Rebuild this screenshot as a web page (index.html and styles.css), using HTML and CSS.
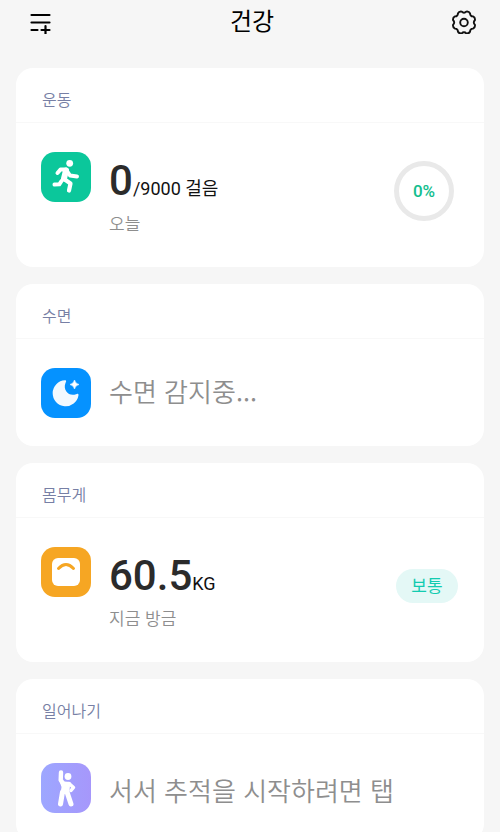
FILE: index.html
```html
<!DOCTYPE html>
<html lang="ko">
<head>
<meta charset="utf-8">
<meta name="viewport" content="width=device-width, initial-scale=1">
<title>건강</title>
<link rel="stylesheet" href="styles.css">
</head>
<body>
<header class="topbar">
  <button class="icon-button" type="button" aria-label="항목 추가">
    <svg width="24" height="24" viewBox="0 0 24 24" fill="none" stroke="#000" stroke-width="2.2" stroke-linecap="round">
      <path d="M3.5 5H21.5M3.5 12.500H21.5M3.5 20H9.5M13.5 20H21.5M17.500 16V24"/>
    </svg>
  </button>
  <h1 class="title">건강</h1>
  <button class="icon-button" type="button" aria-label="설정">
    <svg width="24" height="24" viewBox="-12 -12.5 24 24" fill="none" stroke="#111" stroke-width="1.9" stroke-linejoin="round">
      <path d="M0 -9.8Q1.3 -9.8 2.2 -10.9Q5 -11.4 6.1 -9Q6 -7.6 6.9 -6.9Q7.6 -6 9 -6.1Q11.4 -5 10.9 -2.2Q9.8 -1.3 9.8 0Q9.8 1.3 10.9 2.2Q11.4 5 9 6.1Q7.6 6 6.9 6.9Q6 7.6 6.1 9Q5 11.4 2.2 10.9Q1.3 9.8 0 9.8Q-1.3 9.8 -2.2 10.9Q-5 11.4 -6.1 9Q-6 7.6 -6.9 6.9Q-7.6 6 -9 6.1Q-11.4 5 -10.9 2.2Q-9.8 1.3 -9.8 0Q-9.8 -1.3 -10.9 -2.2Q-11.4 -5 -9 -6.1Q-7.6 -6 -6.9 -6.9Q-6 -7.6 -6.1 -9Q-5 -11.4 -2.2 -10.9Q-1.3 -9.8 0 -9.8Z"/>
      <circle r="3.8"/>
    </svg>
  </button>
</header>
<main class="cards">
  <section class="card">
    <h2 class="card-title">운동</h2>
    <div class="card-body">
      <svg class="badge" viewBox="0 0 50 50" aria-hidden="true">
        <rect width="50" height="50" rx="14" fill="#0bc79b"/>
        <circle cx="28.7" cy="11.3" r="3.4" fill="#fff"/>
        <g fill="none" stroke="#fff" stroke-linecap="round" stroke-linejoin="round">
          <path stroke-width="4" d="M16.5 21L19.5 17.5L25 17.5L29 23.5L36 24.5"/>
          <path stroke-width="6" d="M25 18.5L23 26.5"/>
          <path stroke-width="4.2" d="M23 27L29.5 31.5L28 38.5"/>
          <path stroke-width="4" d="M20.5 29L18.3 32.3L13.5 32.6"/>
        </g>
      </svg>
      <div class="reading">
        <p class="value-line"><strong class="value">0</strong><span class="unit">/9000 걸음</span></p>
        <p class="note">오늘</p>
      </div>
      <div class="ring">0%</div>
    </div>
  </section>
  <section class="card">
    <h2 class="card-title">수면</h2>
    <div class="card-body compact">
      <svg class="badge" viewBox="0 0 50 50" aria-hidden="true">
        <rect width="50" height="50" rx="14" fill="#0592ff"/>
        <path fill="#f2f9ff" d="M24 12.2A13 13 0 1 0 37.5 27.2C37.7 25.6 36.6 25.2 35 26.2C28.5 29 21.5 22.5 24.5 15C25.5 13 25.5 12 24 12.2Z"/>
        <path fill="#fff" stroke="#fff" stroke-width=".6" d="M33.5 12Q34.3 15.7 38 16.5Q34.3 17.3 33.5 21Q32.7 17.3 29 16.5Q32.7 15.7 33.5 12Z"/>
      </svg>
      <p class="message">수면 감지중...</p>
    </div>
  </section>
  <section class="card">
    <h2 class="card-title">몸무게</h2>
    <div class="card-body">
      <svg class="badge" viewBox="0 0 50 50" aria-hidden="true">
        <rect width="50" height="50" rx="14" fill="#f6a623"/>
        <rect x="11" y="11" width="28" height="28" rx="6" fill="#fff"/>
        <path d="M17.5 21.5Q25 13.5 32.5 21.5" fill="none" stroke="#f6a623" stroke-width="3" stroke-linecap="round"/>
      </svg>
      <div class="reading">
        <p class="value-line"><strong class="value">60.5</strong><span class="unit">KG</span></p>
        <p class="note">지금 방금</p>
      </div>
      <span class="tag">보통</span>
    </div>
  </section>
  <section class="card">
    <h2 class="card-title">일어나기</h2>
    <div class="card-body compact">
      <svg class="badge" viewBox="0 0 50 50" aria-hidden="true">
        <defs>
          <linearGradient id="violet" x1="0" y1="0" x2="1" y2="0">
            <stop offset="0" stop-color="#9da7ff"/>
            <stop offset="1" stop-color="#a697fb"/>
          </linearGradient>
        </defs>
        <rect width="50" height="50" rx="14" fill="url(#violet)"/>
        <circle cx="27" cy="13.5" r="3.4" fill="#fff"/>
        <g fill="none" stroke="#fff" stroke-linecap="round" stroke-linejoin="round">
          <path stroke-width="4.4" d="M20 9.5L19.7 17L22.5 21"/>
          <path stroke-width="3.5" d="M28 20.5L32.5 24.5L30 27.5"/>
          <path stroke-width="5" d="M21.5 29L19.5 41M26 29L30 41"/>
        </g>
        <path fill="#fff" d="M18 17L23 18.5L29.5 19L28 31H19.5L20.5 24Z"/>
      </svg>
      <p class="message prompt">서서 추적을 시작하려면 탭</p>
    </div>
  </section>
</main>
</body>
</html>
```
FILE: styles.css
```css
* {
  box-sizing: border-box;
}

body {
  margin: 0;
  background: #f6f6f6;
  color: #111;
  font-family: Roboto, "Noto Sans CJK KR", sans-serif;
}

h1,
h2,
p {
  margin: 0;
}

.topbar {
  display: flex;
  align-items: center;
  justify-content: space-between;
  height: 44px;
  padding: 0 20px 0 24px;
}

.icon-button {
  display: flex;
  align-items: center;
  justify-content: center;
  width: 32px;
  height: 32px;
  padding: 0;
  border: 0;
  background: none;
}

.title {
  font-size: 24px;
  font-weight: 400;
  line-height: 44px;
  color: #000;
}

.cards {
  display: grid;
  gap: 17px;
  padding: 24px 16px 0;
}

.card {
  overflow: hidden;
  border-radius: 17px;
  background: #fff;
}

.card-title {
  padding: 19px 26px 11px;
  border-bottom: 1px solid #f8f8f8;
  color: #777fa5;
  font-family: "Noto Sans CJK KR", sans-serif;
  font-size: 16px;
  font-weight: 350;
  line-height: 24px;
}

.card-body {
  display: flex;
  align-items: flex-start;
  gap: 18px;
  height: 144px;
  padding: 29px 26px 0 25px;
}

.card-body.compact {
  height: 107px;
}

.badge {
  flex: none;
  width: 50px;
  height: 50px;
}

.reading {
  flex: 1;
}

.value-line {
  display: flex;
  align-items: baseline;
  white-space: nowrap;
}

.value {
  color: #2b2b2b;
  font-size: 42px;
  font-weight: 500;
  line-height: 58px;
}

.unit {
  font-size: 18px;
  line-height: 20px;
}

.note {
  color: #8e8e8e;
  font-family: "Noto Sans CJK KR", sans-serif;
  font-size: 17px;
  font-weight: 350;
  line-height: 25px;
}

.message {
  color: #8e8e8e;
  font-family: "Noto Sans CJK KR", sans-serif;
  font-size: 26px;
  font-weight: 350;
  line-height: 46px;
}

.message.prompt {
  line-height: 54px;
}

.ring {
  display: flex;
  align-items: center;
  justify-content: center;
  width: 60px;
  height: 60px;
  margin: 9px 4px 0 0;
  border: 5px solid #e9e9e9;
  border-radius: 50%;
  color: #13be8e;
  font-size: 17px;
  font-weight: 500;
}

.tag {
  width: 62px;
  margin-top: 22px;
  border-radius: 17px;
  background: #e4f8f6;
  color: #12cbb0;
  font-size: 17px;
  line-height: 34px;
  text-align: center;
}
```
